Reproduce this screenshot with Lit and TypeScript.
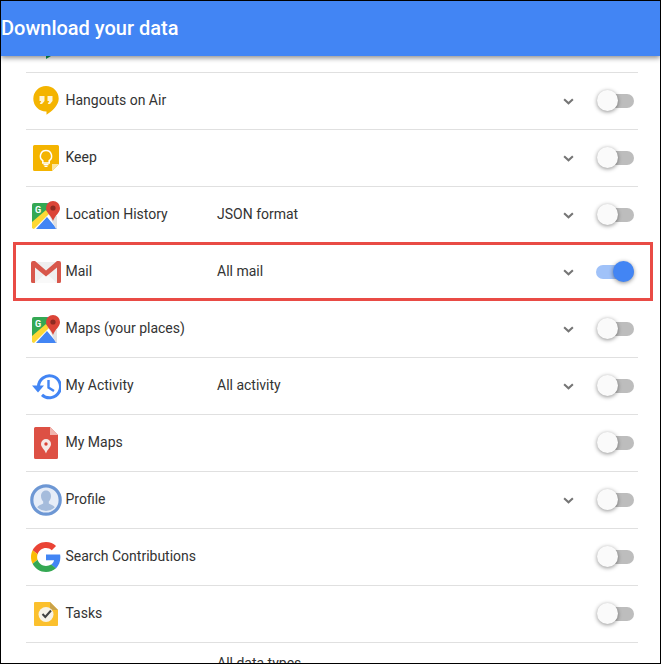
import { LitElement, html, css, svg } from "lit";
import { customElement } from "lit/decorators.js";

const mapsIcon = svg`<svg width="30" height="29" viewBox="0 0 30 29">
  <path d="M1 4a2 2 0 0 1 2-2h20v2L1 27z" fill="#34a853"/>
  <path d="M1 21L15 9l3 4L3 28H3a2 2 0 0 1-2-2z" fill="#fdd835"/>
  <path d="M5 28l11-12 10 12z" fill="#4285f4"/>
  <path d="M17 12l9 3v11a2 2 0 0 1-1 2z" fill="#e0e0e0"/>
  <path d="M15 2h9v3z" fill="#4285f4" opacity=".9"/>
  <text x="4" y="12" font-family="Roboto, sans-serif" font-size="9" font-weight="700" fill="#fff">G</text>
  <path d="M22 0a7 7 0 0 1 7 7c0 5-5 7-7 13-2-6-7-8-7-13a7 7 0 0 1 7-7z" fill="#db4437"/>
  <circle cx="22" cy="7" r="2.6" fill="#8e2a21"/>
</svg>`;

const icons: Record<string, unknown> = {
  play: svg`<svg width="6" height="3" viewBox="0 0 6 3"><path d="M0 0h5L0 3z" fill="#0f9d58"/></svg>`,
  hangouts: svg`<svg width="26" height="30" viewBox="0 0 26 30">
    <path d="M13 0a12.7 12.7 0 0 1 12.7 12.7C25.700 19.500 19 25 13.500 28.800V25.400H13A12.700 12.700 0 0 1 13 0z" fill="#f4b400"/>
    <path d="M6.500 10h5v5l-2.500 3H6.700l1.500-3H6.500zM14.500 10h5v5l-2.500 3h-2.300l1.500-3h-1.700z" fill="#fff" fill-opacity=".85"/>
  </svg>`,
  keep: svg`<svg width="26" height="26" viewBox="0 0 26 26">
    <path d="M1.500 0h23A1.500 1.500 0 0 1 26 1.500V19l-7 7H1.500A1.500 1.500 0 0 1 0 24.500v-23A1.500 1.500 0 0 1 1.500 0z" fill="#f4b400"/>
    <path d="M26 19h-7v7z" fill="#fbe6a2"/>
    <path d="M13 5.500a5.600 5.600 0 0 0-3.200 10.200V18h6.400v-2.300A5.600 5.600 0 0 0 13 5.500z" fill="none" stroke="#fff" stroke-width="1.500"/>
    <path d="M10.500 19.700h5M11.500 21.300h3" stroke="#fff" stroke-width="1.200"/>
  </svg>`,
  maps: mapsIcon,
  gmail: svg`<svg width="30" height="22" viewBox="0 0 30 22">
    <path d="M1 1h28v19.500a1.500 1.500 0 0 1-1.500 1.500h-25A1.500 1.500 0 0 1 1 20.500z" fill="#efefef"/>
    <path d="M4 22l11-10 11 10z" fill="#f9f9f9"/>
    <path d="M2 0h2l11 9.500L26 0h2a2 2 0 0 1 2 2v18.500a1.500 1.500 0 0 1-1.500 1.500H26V6.500L15 15.500 4 6.500V22H1.500A1.500 1.500 0 0 1 0 20.500V2a2 2 0 0 1 2-2z" fill="#d8574b"/>
  </svg>`,
  activity: svg`<svg width="29" height="27" viewBox="0 0 29 27">
    <path d="M6.500 13.500A11 11 0 1 1 10 21.800" fill="none" stroke="#4285f4" stroke-width="3"/>
    <path d="M0 12.500h12L6 19.500z" fill="#4285f4"/>
    <path d="M16.500 7v7.500l5.500 3.500" fill="none" stroke="#4285f4" stroke-width="2.400"/>
  </svg>`,
  mymaps: svg`<svg width="24" height="32" viewBox="0 0 24 32">
    <path d="M1.500 0H16l8 8v22.500a1.500 1.500 0 0 1-1.500 1.500h-21A1.500 1.500 0 0 1 0 30.500v-29A1.500 1.500 0 0 1 1.500 0z" fill="#dd5044"/>
    <path d="M16 0l8 8h-8z" fill="#f1b5ae"/>
    <path d="M12 12a5 5 0 0 1 5 5c0 3.500-3.500 5-5 9.500-1.500-4.500-5-6-5-9.500a5 5 0 0 1 5-5z" fill="#f5e9e7"/>
    <circle cx="12" cy="17" r="1.700" fill="#db4437"/>
  </svg>`,
  profile: svg`<svg width="32" height="32" viewBox="0 0 32 32">
    <circle cx="16" cy="16" r="14.200" fill="#e6edf8" stroke="#6d97d4" stroke-width="3.200"/>
    <path d="M16 6.500c3.200 0 5 2.500 5 5.500 0 2.500-1 4.500-2.200 5.500v2c1.500 1.200 5 1.800 6 3.800a12.500 12.500 0 0 1-17.600 0c1-2 4.500-2.600 6-3.800v-2C12 16.500 11 14.500 11 12c0-3 1.800-5.500 5-5.500z" fill="#a5bcdc"/>
  </svg>`,
  google: svg`<svg width="30" height="30" viewBox="0 0 48 48">
    <path fill="#ea4335" d="M24 9.500c3.540 0 6.710 1.220 9.210 3.600l6.850-6.850C35.900 2.380 30.470 0 24 0 14.620 0 6.510 5.380 2.560 13.220l7.980 6.190C12.430 13.720 17.740 9.500 24 9.500z"/>
    <path fill="#4285f4" d="M46.980 24.550c0-1.570-.15-3.090-.38-4.550H24v9.020h12.940c-.58 2.960-2.260 5.480-4.780 7.180l7.730 6c4.510-4.180 7.090-10.360 7.090-17.650z"/>
    <path fill="#fbbc05" d="M10.530 28.590c-.48-1.450-.76-2.990-.76-4.590s.27-3.140.76-4.590l-7.980-6.190C.92 16.460 0 20.120 0 24c0 3.880.92 7.540 2.560 10.780l7.970-6.190z"/>
    <path fill="#34a853" d="M24 48c6.480 0 11.930-2.130 15.890-5.810l-7.730-6c-2.150 1.450-4.920 2.300-8.160 2.300-6.260 0-11.570-4.220-13.470-9.910l-7.980 6.190C6.510 42.620 14.620 48 24 48z"/>
  </svg>`,
  tasks: svg`<svg width="24" height="24" viewBox="0 0 24 24">
    <path d="M1 0h15l8 8v15a1 1 0 0 1-1 1H1a1 1 0 0 1-1-1V1a1 1 0 0 1 1-1z" fill="#fbc02d"/>
    <path d="M16 0l8 8h-8z" fill="#c9a24a"/>
    <circle cx="12" cy="12.500" r="7.500" fill="#f7f3e8"/>
    <path d="M8.500 12l2.800 3L17 8.500" fill="none" stroke="#424242" stroke-width="2"/>
  </svg>`,
};

interface Row { icon: string; label: string; detail?: string; chevron?: boolean; on?: boolean; hl?: boolean; }

const rows: Row[] = [
  { icon: "hangouts", label: "Hangouts on Air", chevron: true },
  { icon: "keep", label: "Keep", chevron: true },
  { icon: "maps", label: "Location History", detail: "JSON format", chevron: true },
  { icon: "gmail", label: "Mail", detail: "All mail", chevron: true, on: true, hl: true },
  { icon: "maps", label: "Maps (your places)", chevron: true },
  { icon: "activity", label: "My Activity", detail: "All activity", chevron: true },
  { icon: "mymaps", label: "My Maps" },
  { icon: "profile", label: "Profile", chevron: true },
  { icon: "google", label: "Search Contributions" },
  { icon: "tasks", label: "Tasks" },
];

@customElement("app-root")
export class AppRoot extends LitElement {
  static styles = css`
    :host {
      display: flex;
      flex-direction: column;
      box-sizing: border-box;
      width: 661px;
      height: 664px;
      border: 1px solid #000;
      background: #fff;
      overflow: hidden;
      font-family: Roboto, "Liberation Sans", sans-serif;
      font-size: 14px;
      color: #333;
    }
    .bar {
      flex: none;
      position: relative;
      z-index: 2;
      box-sizing: border-box;
      height: 55px;
      display: flex;
      align-items: center;
      padding-bottom: 2px;
      background: #4285f4;
      color: #fff;
      font-size: 20px;
      font-weight: 500;
      box-shadow: 0 2px 5px rgba(0, 0, 0, 0.45);
    }
    .list {
      flex: 1;
      min-height: 0;
      overflow: hidden;
      padding: 0 22px 0 25px;
      display: flex;
      flex-direction: column;
    }
    .row {
      flex: none;
      position: relative;
      box-sizing: border-box;
      height: 57px;
      display: flex;
      align-items: center;
      border-bottom: 1px solid #e0e0e0;
    }
    .row.partial {
      height: 17px;
      align-items: flex-start;
    }
    .row.hl::after {
      content: "";
      position: absolute;
      top: -2px;
      bottom: -1px;
      left: -13px;
      right: -15px;
      border: 3px solid #e94b45;
      pointer-events: none;
    }
    .row.tail {
      height: 40px;
      border-bottom: 0;
      align-items: flex-start;
      padding-top: 12px;
    }
    .icon {
      flex: none;
      width: 40px;
      display: flex;
      justify-content: center;
      align-items: center;
    }
    .icon svg { display: block; }
    .partial .icon { padding-left: 6px; box-sizing: border-box; }
    .label {
      flex: none;
      width: 151.5px;
      margin-left: -0.5px;
      padding-bottom: 2px;
    }
    .detail { flex: 1; min-width: 0; padding-bottom: 2px; }
    .chev {
      flex: none;
      width: 11px;
      height: 7px;
      margin-right: 22px;
      display: block;
    }
    .toggle {
      flex: none;
      position: relative;
      width: 38px;
      height: 14px;
      margin-right: 4px;
      display: flex;
      justify-content: flex-end;
    }
    .track {
      width: 30px;
      height: 14px;
      border-radius: 7px;
      background: #bdbdbd;
    }
    .thumb {
      position: absolute;
      top: -4px;
      left: 0.5px;
      width: 21px;
      height: 21px;
      border-radius: 50%;
      background: #fafafa;
      box-shadow: 0 1px 4px rgba(0, 0, 0, 0.45);
    }
    .toggle.on .track { width: 38px; background: #a0c2f9; }
    .toggle.on .thumb { left: 17px; background: #4285f4; }
  `;

  private chevron() {
    return html`<svg class="chev" viewBox="0 0 12 8"><path d="M1 1.500l5 4.500 5-4.500" fill="none" stroke="#757575" stroke-width="2.400"/></svg>`;
  }

  render() {
    return html`
      <div class="bar">Download your data</div>
      <div class="list">
        <div class="row partial"><div class="icon">${icons.play}</div></div>
        ${rows.map(
          (r) => html`
            <div class="row ${r.hl ? "hl" : ""}">
              <div class="icon">${icons[r.icon]}</div>
              <div class="label">${r.label}</div>
              <div class="detail">${r.detail ?? ""}</div>
              ${r.chevron ? this.chevron() : ""}
              <div class="toggle ${r.on ? "on" : ""}">
                <div class="track"></div>
                <div class="thumb"></div>
              </div>
            </div>
          `
        )}
        <div class="row tail">
          <div class="icon"></div>
          <div class="label"></div>
          <div class="detail">All data types</div>
        </div>
      </div>
    `;
  }
}
